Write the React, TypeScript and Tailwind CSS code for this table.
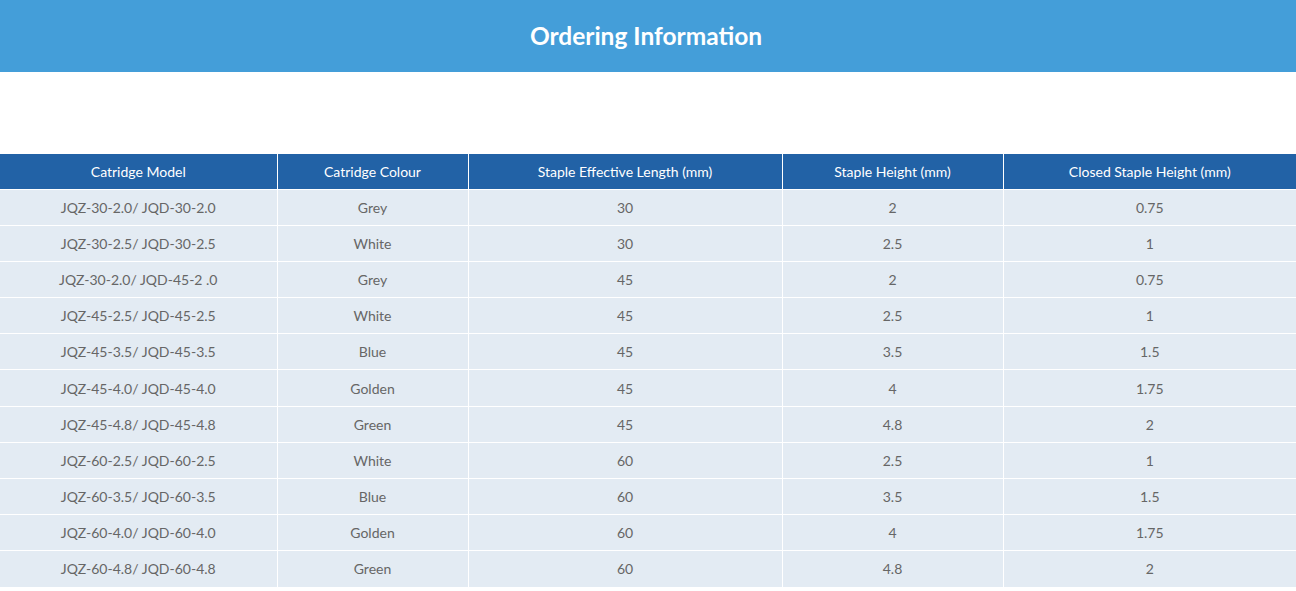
const headers = [
  'Catridge Model',
  'Catridge Colour',
  'Staple Effective Length (mm)',
  'Staple Height (mm)',
  'Closed Staple Height (mm)',
];

const widths = ['w-[277px]', 'w-[191px]', 'w-[314px]', 'w-[221px]', 'w-[293px]'];

const rows = [
  ['JQZ-30-2.0/ JQD-30-2.0', 'Grey', '30', '2', '0.75'],
  ['JQZ-30-2.5/ JQD-30-2.5', 'White', '30', '2.5', '1'],
  ['JQZ-30-2.0/ JQD-45-2 .0', 'Grey', '45', '2', '0.75'],
  ['JQZ-45-2.5/ JQD-45-2.5', 'White', '45', '2.5', '1'],
  ['JQZ-45-3.5/ JQD-45-3.5', 'Blue', '45', '3.5', '1.5'],
  ['JQZ-45-4.0/ JQD-45-4.0', 'Golden', '45', '4', '1.75'],
  ['JQZ-45-4.8/ JQD-45-4.8', 'Green', '45', '4.8', '2'],
  ['JQZ-60-2.5/ JQD-60-2.5', 'White', '60', '2.5', '1'],
  ['JQZ-60-3.5/ JQD-60-3.5', 'Blue', '60', '3.5', '1.5'],
  ['JQZ-60-4.0/ JQD-60-4.0', 'Golden', '60', '4', '1.75'],
  ['JQZ-60-4.8/ JQD-60-4.8', 'Green', '60', '4.8', '2'],
];

export default function App() {
  return (
    <div className="min-h-screen bg-white font-['Lato',sans-serif]">
      <div className="flex h-[72px] items-center justify-center bg-[#449ed9] pr-[4px]">
        <h2 className="text-[24.5px] font-bold text-white">Ordering Information</h2>
      </div>

      <div className="mt-[82px]">
        <table className="w-full table-fixed border-collapse">
          <thead>
            <tr className="h-[35px] bg-[#2262a6]">
              {headers.map((h, i) => (
                <th
                  key={h}
                  className={`${widths[i]} border-x border-white text-center text-[14px] font-normal text-white first:border-l-0 last:border-r-0`}
                >
                  {h}
                </th>
              ))}
            </tr>
          </thead>
          <tbody>
            {rows.map((row, r) => (
              <tr key={r} className="h-[36.2px] bg-[#e3ebf3]">
                {row.map((cell, c) => (
                  <td
                    key={c}
                    className="border border-white text-center text-[14px] text-[#666] first:border-l-0 last:border-r-0"
                  >
                    {cell}
                  </td>
                ))}
              </tr>
            ))}
          </tbody>
        </table>
      </div>
    </div>
  );
}
